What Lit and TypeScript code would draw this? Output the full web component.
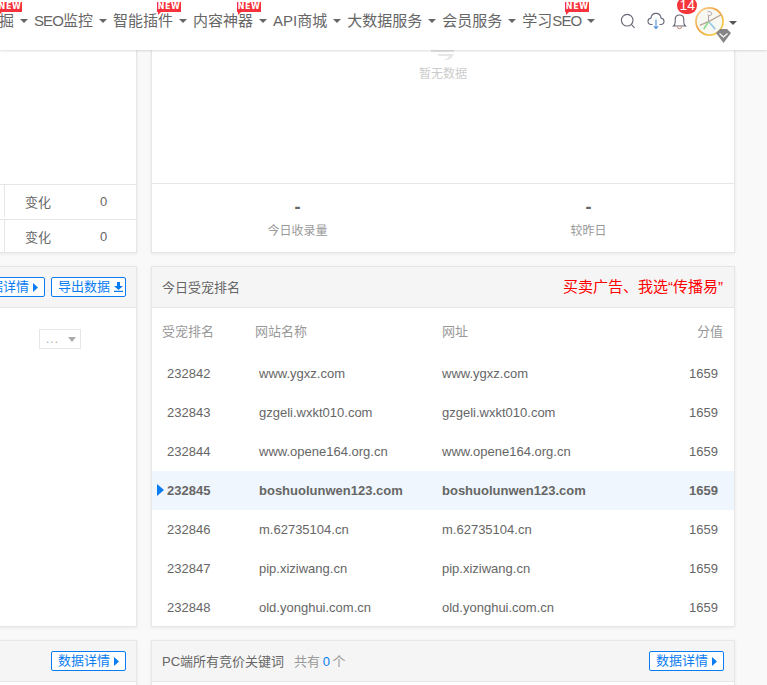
import { LitElement, html, css, svg } from "lit";
import { customElement } from "lit/decorators.js";

const SEO = html`<span class="tight">SEO</span>`;
const NAV = [
  { t: html`掘`, isNew: true },
  { t: html`${SEO}监控` },
  { t: html`智能插件`, isNew: true },
  { t: html`内容神器`, isNew: true },
  { t: html`API商城` },
  { t: html`大数据服务` },
  { t: html`会员服务` },
  { t: html`学习${SEO}`, isNew: true },
];
const ROWS = [
  ["232842", "www.ygxz.com", "1659"],
  ["232843", "gzgeli.wxkt010.com", "1659"],
  ["232844", "www.opene164.org.cn", "1659"],
  ["232845", "boshuolunwen123.com", "1659"],
  ["232846", "m.62735104.cn", "1659"],
  ["232847", "pip.xiziwang.cn", "1659"],
  ["232848", "old.yonghui.com.cn", "1659"],
];
const caretRight = svg`<svg width="5" height="9" viewBox="0 0 5 9"><path d="M0 0l5 4.500L0 9z" fill="#0a7cf2"/></svg>`;

@customElement("app-root")
export class AppRoot extends LitElement {
  static styles = css`
    :host { display: block; width: 767px; height: 685px; overflow: hidden; background: #f9f9f9;
      font-family: "Liberation Sans", "Noto Sans CJK SC", sans-serif; color: #666; font-size: 13px; }
    .header { height: 50px; background: #fff; box-shadow: 0 1px 2px rgba(0,0,0,.14); display: flex; align-items: flex-start;
      position: relative; z-index: 2; }
    .nav { display: flex; margin-left: -1px; height: 42px; align-items: center; }
    .nav-item { position: relative; display: flex; align-items: center; font-size: 15px; line-height: 22px; color: #666; white-space: nowrap; margin-right: 6px; }
    .tight { letter-spacing: -.9px; }
    .caret { width: 0; height: 0; border: 4px solid transparent; border-top: 4px solid #666; border-bottom: 0; margin-left: 6px; }
    .new { position: absolute; top: -8px; right: 6px; width: 24px; height: 10px; background: #f8323c; color: #fff;
      font: bold 8px/10px "DejaVu Sans", sans-serif; text-align: center; letter-spacing: .6px; }
    .new::after { content: ""; position: absolute; left: 1px; bottom: -3px; border-left: 3px solid #f8323c; border-bottom: 3px solid transparent; }
    .tools { display: flex; align-items: center; margin-left: 19px; height: 42px; position: relative; }
    .tools svg { display: block; }
    .badge { position: absolute; left: 57px; top: -3px; width: 20px; height: 17px; border-radius: 10px; background: #f5353c; color: #fff; font-size: 14px; line-height: 17px; text-align: center; }
    .avatar { margin-left: 8px; position: relative; }
    .gem { position: absolute; left: 21px; top: 22px; }
    .tcaret { margin-left: 5px; border-top-color: #555; margin-top: 3px; }

    .grid { display: grid; margin-left: -10px; grid-template-columns: 147px 584px; column-gap: 14px; row-gap: 13px; grid-template-rows: 203px 361px 100px; }
    .card { background: #fff; border: 1px solid #e6e6e6; box-sizing: border-box; box-shadow: 0 1px 3px rgba(0,0,0,.07); min-width: 0; }
    .top { border-top: 0; }

    .left-1 { display: flex; flex-direction: column; justify-content: flex-end; }
    .lrow { height: 35px; border-top: 1px solid #e6e6e6; box-sizing: border-box; display: grid; grid-template-columns: 14px 1fr 36px; align-items: center; font-size: 13px; padding-bottom: 2px; }
    .lrow + .lrow { height: 33px; padding-bottom: 0; }
    .lrow .sep { height: 100%; border-right: 1px solid #e6e6e6; }
    .lrow .lab { padding-left: 20px; }

    .head { height: 40px; background: #f5f5f5; border-bottom: 1px solid #e6e6e6; display: flex; align-items: center; box-sizing: content-box; padding: 0 10px 0 10px; justify-content: space-between; font-size: 13px; color: #666; }
    .head.end { justify-content: flex-end; gap: 6px; }
    .btn { height: 20px; width: 75px; flex: none; box-sizing: border-box; border: 1px solid #0a7cf2; border-radius: 2px; background: #fff; color: #0a7cf2; font-size: 13px; line-height: 18px; display: flex; align-items: center; padding-left: 6px; gap: 4px; white-space: nowrap; }
    .drop-wrap { display: flex; justify-content: flex-end; padding: 21px 55px 0 0; }
    .drop { width: 42px; height: 20px; border: 1px solid #e6e6e6; box-sizing: border-box; display: flex; align-items: center; justify-content: space-between; padding: 0 4px 0 6px; color: #aaa; font-size: 12px; letter-spacing: 1px; }
    .drop i { width: 0; height: 0; border: 4px solid transparent; border-top: 5px solid #aaa; border-bottom: 0; }

    .right-1 { display: flex; flex-direction: column; }
    .empty { height: 133px; display: flex; flex-direction: column; align-items: center; color: #ccc; font-size: 12px; }
    .empty span { margin-top: 4px; }
    .stats { flex: 1; border-top: 1px solid #e6e6e6; display: grid; grid-template-columns: 291px 291px; text-align: center; }
    .stat b { display: block; font-size: 18px; font-weight: bold; line-height: 20px; margin-top: 13px; color: #666; }
    .stat span { display: block; font-size: 12px; color: #999; margin-top: 4px; line-height: 20px; }

    .ad { color: #f00; font-size: 15px; margin-bottom: 4px; margin-right: 1px; }
    .title { color: #666; font-size: 13px; margin-bottom: 2px; }
    .muted { color: #999; margin-left: 10px; word-spacing: -1px; }
    .blue { color: #0a7cf2; }

    .trow { display: grid; grid-template-columns: 92px 183px 1fr 47px; height: 39px; align-items: center; position: relative; font-size: 13px; padding: 0 16px 0 15px; color: #666; }
    .thead { height: 46px; font-size: 13px; color: #999; padding: 0 11px 2px 10px; box-sizing: border-box; grid-template-columns: 93px 187px 1fr 47px; }
    .num { text-align: right; }
    .trow.cur { background: #eff6fd; font-weight: bold; }
    .arrow { position: absolute; left: 5px; top: 13px; }
  `;

  render() {
    return html`
      <div class="header">
        <div class="nav">
          ${NAV.map(n => html`<div class="nav-item"><span>${n.t}</span>${n.isNew ? html`<span class="new">NEW</span>` : ""}<span class="caret"></span></div>`)}
        </div>
        <div class="tools">
          <svg width="16" height="16" viewBox="0 0 16 16" fill="none" stroke="#667" stroke-width="1.100"><circle cx="7.200" cy="7.200" r="5.800"/><path d="M11.300 11.300L14.600 14.800"/></svg>
          <svg style="margin-left:11px" width="18" height="18" viewBox="0 0 18 18" fill="none" stroke="#667" stroke-width="1.100"><path d="M5.500 12.500H4.300C2.400 12.500 1 11 1 9.300 1 7.600 2.300 6.300 3.900 6.100 4.300 3.400 6.400 1.400 9 1.400s4.700 2 5.100 4.700c1.600.2 2.900 1.500 2.900 3.200 0 1.700-1.400 3.200-3.300 3.200h-1.200"/><path d="M9 7.500V16.500M6.800 14.300L9 16.500l2.200-2.200" stroke="#4a90d9"/></svg>
          <svg style="margin-left:7px" width="15" height="17" viewBox="0 0 15 17" fill="none" stroke="#667" stroke-width="1.100"><path d="M1.500 13h12c-1.200-1-1.700-2-1.700-4V6.500C11.800 3.800 10 2 7.500 2S3.200 3.800 3.200 6.500V9c0 2-.5 3-1.700 4z"/><path d="M5.500 13.500c0 1.300.9 2.200 2 2.200s2-.9 2-2.200" stroke="#c98"/></svg>
          <span class="badge">14</span>
          <div class="avatar">
            <svg width="29" height="29" viewBox="0 0 30 30" fill="none">
              <defs><linearGradient id="r" x1="0" y1="0" x2="1" y2="1"><stop offset="0" stop-color="#f6d9a0"/><stop offset=".45" stop-color="#f2a23a"/><stop offset="1" stop-color="#f7e05a"/></linearGradient></defs>
              <circle cx="15" cy="15" r="14" fill="#f8f8f2" stroke="url(#r)" stroke-width="1.800"/>
              <path d="M5 19L16 14 27 8" stroke="#b9a595" stroke-width="1.400"/>
              <path d="M13 5c3-1 5 1 4 3-1 1-3 1-4 0M14 9l0 6 6 6" stroke="#a995a5" stroke-width="1"/>
              <path d="M14 15l-5 8" stroke="#8fd88a" stroke-width="1.600"/>
              <path d="M15 16l6 7" stroke="#8fc8ea" stroke-width="1.600"/>
            </svg>
            <svg class="gem" width="15" height="14" viewBox="0 0 15 14"><path d="M4 0h7l4 4-7.500 10L0 4z" fill="#858585"/><path d="M3.500 4.500l4 3.500 4-3.500" fill="none" stroke="#eee" stroke-width="1.500"/></svg>
          </div>
          <span class="caret tcaret"></span>
        </div>
      </div>
      <div class="grid">
        <div class="card top left-1">
          <div class="lrow"><span class="sep"></span><span class="lab">变化</span><span>0</span></div>
          <div class="lrow"><span class="sep"></span><span class="lab">变化</span><span>0</span></div>
        </div>
        <div class="card top right-1">
          <div class="empty">
            <svg width="24" height="10" viewBox="0 0 24 10"><path d="M0 0h23v2H0zM6 4h17l-2 3c-1 2-3 3-6 3-1 0-2 0-3-.5 2 0 5-.5 6-3.500H8z" fill="#e6e6e6"/></svg>
            <span>暂无数据</span>
          </div>
          <div class="stats">
            <div class="stat"><b>-</b><span>今日收录量</span></div>
            <div class="stat"><b>-</b><span>较昨日</span></div>
          </div>
        </div>

        <div class="card">
          <div class="head end">
            <span class="btn">数据详情${caretRight}</span>
            <span class="btn">导出数据<svg width="9" height="10" viewBox="0 0 9 10"><path d="M3 0h3v4h3L4.500 8 0 4h3zM0 8.800h9V10H0z" fill="#0a7cf2"/></svg></span>
          </div>
          <div class="drop-wrap"><div class="drop"><span>...</span><i></i></div></div>
        </div>
        <div class="card">
          <div class="head"><span class="title">今日受宠排名</span><span class="ad">买卖广告、我选“传播易”</span></div>
          <div class="trow thead"><span>受宠排名</span><span>网站名称</span><span>网址</span><span class="num">分值</span></div>
          ${ROWS.map((r, i) => html`<div class="trow ${i === 3 ? "cur" : ""}">
            ${i === 3 ? html`<svg class="arrow" width="7" height="12" viewBox="0 0 7 12"><path d="M0 0l7 6-7 6z" fill="#0a7cf2"/></svg>` : ""}
            <span>${r[0]}</span><span>${r[1]}</span><span>${r[1]}</span><span class="num">${r[2]}</span></div>`)}
        </div>

        <div class="card">
          <div class="head end"><span class="btn">数据详情${caretRight}</span></div>
        </div>
        <div class="card">
          <div class="head"><span class="title">PC端所有竞价关键词<span class="muted">共有 <span class="blue">0</span> 个</span></span><span class="btn">数据详情${caretRight}</span></div>
        </div>
      </div>
    `;
  }
}
